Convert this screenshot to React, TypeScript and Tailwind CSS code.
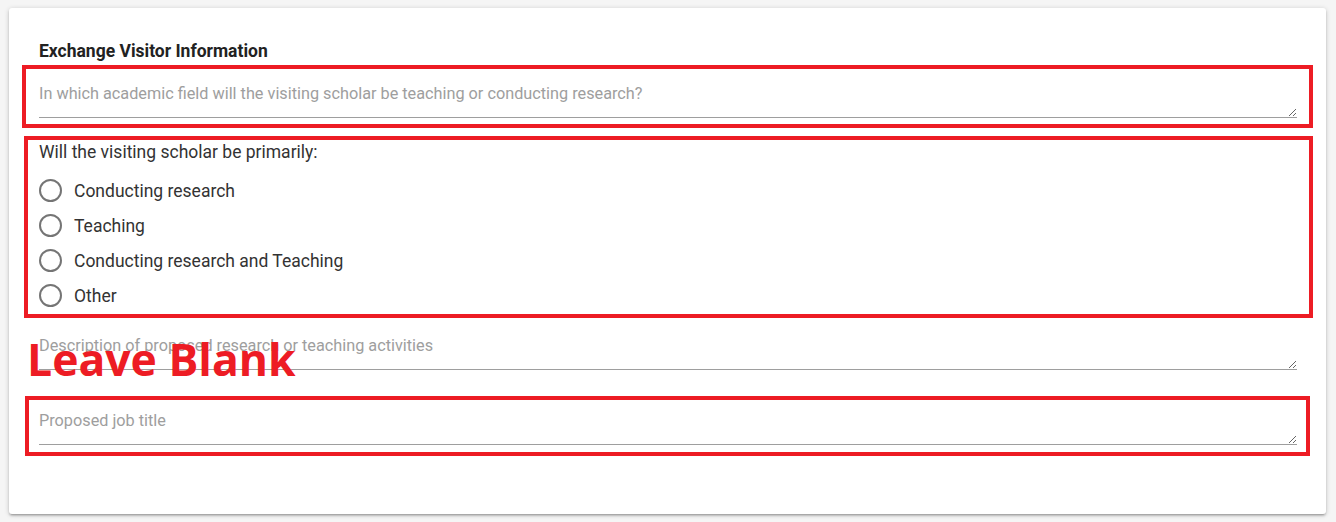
import React from "react";

const Field = ({ placeholder, className = "" }: { placeholder: string; className?: string }) => (
  <textarea
    placeholder={placeholder}
    className={`block w-full h-[41px] pt-[5px] pb-0 px-0 text-[16.25px] leading-6 text-[#333] bg-transparent border-0 border-b border-solid border-[#9e9e9e] outline-none resize-y placeholder:text-[#9e9e9e] ${className}`}
    style={{ fontFamily: "Roboto, sans-serif" }}
  />
);

const Radio = ({ label }: { label: string }) => (
  <label className="flex items-center h-[35px] cursor-pointer">
    <span className="w-[23px] h-[23px] rounded-full border-[2.5px] border-solid border-[#757575] shrink-0" />
    <span className="ml-3 text-[17.5px] leading-6 text-[#333]">{label}</span>
  </label>
);

export default function App() {
  return (
    <div className="w-[1336px] h-[522px] bg-[#f5f5f5] pt-[8px] pl-[9px]" style={{ fontFamily: "Roboto, sans-serif" }}>
      <div className="relative w-[1317px] h-[506px] bg-white rounded-[3px] pt-[31px] pl-[30px] pr-[29px] shadow-[0_2px_2px_0_rgba(0,0,0,0.14),0_3px_1px_-2px_rgba(0,0,0,0.12),0_1px_5px_0_rgba(0,0,0,0.2)]">
        <h2 className="text-[17.5px] leading-6 font-bold text-[#222]">Exchange Visitor Information</h2>
        <div className="mt-[14px]">
          <Field placeholder="In which academic field will the visiting scholar be teaching or conducting research?" />
        </div>
        <div className="mt-[22px] text-[17.5px] leading-6 text-[#333]">Will the visiting scholar be primarily:</div>
        <div className="mt-[9px] flex flex-col">
          <Radio label="Conducting research" />
          <Radio label="Teaching" />
          <Radio label="Conducting research and Teaching" />
          <Radio label="Other" />
        </div>
        <div className="mt-[16px]">
          <Field placeholder="Description of proposed research or teaching activities" />
        </div>
        <div className="mt-[34px]">
          <Field placeholder="Proposed job title" />
        </div>

        {/* annotation overlays */}
        <div className="absolute left-[13px] top-[57px] w-[1291px] h-[63px] border-4 border-solid border-[#ed1c24] pointer-events-none" />
        <div className="absolute left-[15px] top-[128px] w-[1289px] h-[182px] border-4 border-solid border-[#ed1c24] pointer-events-none" />
        <div className="absolute left-[16px] top-[388px] w-[1285px] h-[60px] border-4 border-solid border-[#ed1c24] pointer-events-none" />
        <div
          className="absolute left-[18px] top-[325px] text-[44.5px] leading-[52px] font-bold text-[#ed1c24] pointer-events-none whitespace-nowrap"
          style={{ fontFamily: "'Open Sans', sans-serif" }}
        >
          Leave Blank
        </div>
      </div>
    </div>
  );
}
